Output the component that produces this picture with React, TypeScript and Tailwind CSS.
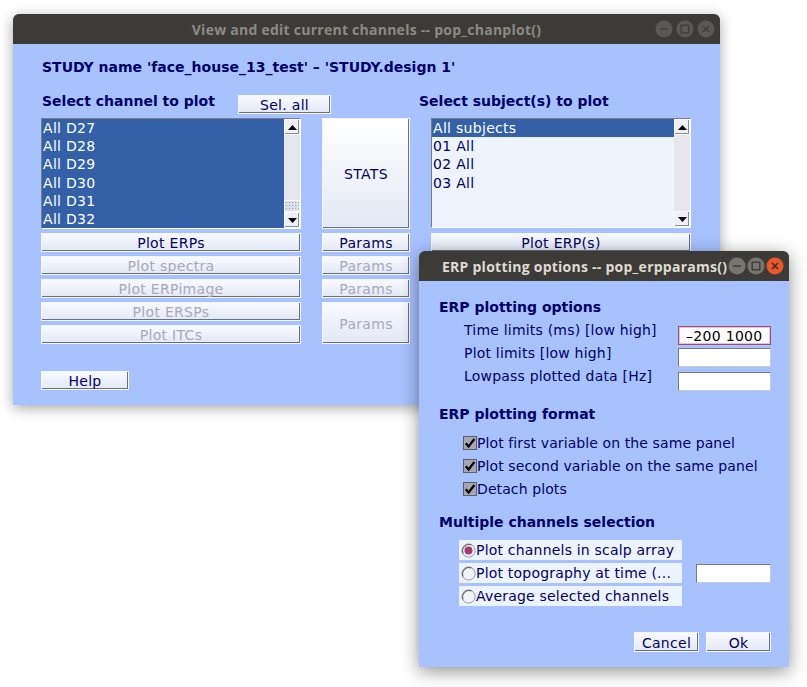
import type { ReactNode } from 'react'
import clsx from 'clsx'

const FONT = "font-['DejaVu_Sans','Liberation_Sans',sans-serif]"

function TitleBar({ title, active }: { title: string; active: boolean }) {
  return (
    <div
      className={clsx(
        'relative flex h-[30px] shrink-0 items-center rounded-t-[6px] bg-[#3c3b37]',
        "font-['Open_Sans','Lato',sans-serif] text-[14px] font-bold tracking-[0.25px]",
        active ? 'justify-start pl-[23px] text-[#dfdbd2]' : 'justify-center text-[#8c8a85]',
      )}
    >
      <span className="whitespace-nowrap">{title}</span>
      <div className={clsx('absolute right-[5px] top-[6px] flex', active ? 'gap-[1px]' : 'gap-[3px]')}>
        <WinButton kind="min" active={active} />
        <WinButton kind="max" active={active} />
        <WinButton kind="close" active={active} />
      </div>
    </div>
  )
}

function WinButton({ kind, active }: { kind: 'min' | 'max' | 'close'; active: boolean }) {
  const isClose = kind === 'close' && active
  const fill = isClose ? '#e9572a' : active ? '#76756f' : '#5a5955'
  const ink = isClose ? '#3c2a20' : active ? '#3c3b37' : '#3f3e3a'
  return (
    <svg width="18" height="18" viewBox="0 0 18 18">
      <circle cx="9" cy="9" r="8.5" fill={fill} />
      {kind === 'min' && <path d="M5 9h8" stroke={ink} strokeWidth="1.4" />}
      {kind === 'max' && <rect x="5.2" y="5.2" width="7.6" height="7.6" fill="none" stroke={ink} strokeWidth="1.3" />}
      {kind === 'close' && <path d="M6 6l6 6M12 6l-6 6" stroke={ink} strokeWidth="1.5" />}
    </svg>
  )
}

function Btn({ children, disabled, className }: { children: ReactNode; disabled?: boolean; className?: string }) {
  return (
    <div
      className={clsx(
        'flex items-center justify-center border border-[#f4f7ff] bg-linear-to-b from-[#f8faff] to-[#e3e8f4]',
        'shadow-[inset_-1px_-1px_0_#6c707c] pt-[1px] text-[14px] leading-none tracking-[0.3px] whitespace-nowrap',
        disabled ? 'text-[#a9a9bc]' : 'text-[#000066]',
        className,
      )}
    >
      {children}
    </div>
  )
}

function Arrow({ up }: { up?: boolean }) {
  return (
    <div className="flex h-[16px] items-center justify-center border border-[#f8f9fc] bg-[#eef0f6] shadow-[inset_-1px_-1px_0_#8a8c94]">
      <svg width="9" height="5" viewBox="0 0 9 5">
        <path d={up ? 'M0 5L4.5 0L9 5Z' : 'M0 0L4.5 5L9 0Z'} fill="#000" />
      </svg>
    </div>
  )
}

function ScrollBar({ thumb }: { thumb?: boolean }) {
  return (
    <div className="flex w-[16px] flex-col bg-[#e6e7ee]">
      <Arrow up />
      <div className="flex flex-1 flex-col justify-end">
        {thumb && (
          <div className="h-[12px] border border-[#f8f9fc] bg-[#d9e0ee] bg-[radial-gradient(#9aa6c0_0.6px,transparent_0.8px)] bg-[length:3px_3px]" />
        )}
      </div>
      <Arrow />
    </div>
  )
}

function ListBox({
  items,
  selected,
  height,
  thumb,
}: {
  items: string[]
  selected: (i: number) => boolean
  height: string
  thumb?: boolean
}) {
  return (
    <div
      className={clsx(
        'flex w-[260px] border border-t-[#7b7b80] border-l-[#7b7b80] border-b-white border-r-white',
        thumb ? 'bg-[#3360a7]' : 'bg-[#eef4ff]',
        height,
      )}
    >
      <div className="flex flex-1 flex-col">
        {items.map((it, i) => (
          <div
            key={it}
            className={clsx(
              'h-[18.2px] pl-[1px] text-[14px] leading-[19px] tracking-[0.3px] whitespace-nowrap',
              selected(i) ? 'bg-[#3360a7] text-white' : 'text-[#000066]',
            )}
          >
            {it}
          </div>
        ))}
      </div>
      <ScrollBar thumb={thumb} />
    </div>
  )
}

function Field({ value, focused, className }: { value?: string; focused?: boolean; className?: string }) {
  return (
    <div
      className={clsx(
        'flex h-[19px] items-center bg-white pl-[7px] text-[14px] leading-none tracking-[0.3px] text-black',
        focused
          ? 'border border-[#a44a76] shadow-[inset_0_0_0_1px_#e8c3d4]'
          : 'border border-t-[#7a7a7a] border-l-[#7a7a7a] border-b-[#c9cbd2] border-r-[#c9cbd2]',
        className,
      )}
    >
      {value}
    </div>
  )
}

function Check({ label }: { label: string }) {
  return (
    <div className="flex h-[18px] items-center">
      <svg width="14" height="14" viewBox="0 0 14 14">
        <rect x="0.5" y="0.5" width="13" height="13" fill="#a7a7b3" stroke="#5e5e66" />
        <path d="M2.8 7.2L5.6 10.4L11.4 3" stroke="#000" strokeWidth="2.3" fill="none" />
      </svg>
      <span className="tracking-[0.1px]">{label}</span>
    </div>
  )
}

function Radio({ label, on }: { label: string; on?: boolean }) {
  return (
    <div className="flex h-[20px] w-[223px] items-center bg-[#eef4ff] pl-[2px]">
      <svg width="15" height="15" viewBox="0 0 15 15">
        <circle cx="7.5" cy="7.5" r="6.6" fill="#f1f4fb" stroke="#9a9aa2" strokeWidth="1" />
        <path d="M2 10.5A6.6 6.6 0 0 1 10.5 1.9" stroke="#55555c" strokeWidth="1" fill="none" />
        {on && <circle cx="7.5" cy="7.5" r="4" fill="#a23b6c" />}
      </svg>
      <span className="whitespace-nowrap tracking-[0.2px]">{label}</span>
    </div>
  )
}

function ChannelWindow() {
  const channels = ['All D27', 'All D28', 'All D29', 'All D30', 'All D31', 'All D32']
  const subjects = ['All subjects', '01 All', '02 All', '03 All']
  return (
    <div className="absolute left-[13px] top-[14px] flex h-[391px] w-[707px] flex-col rounded-t-[6px] bg-[#a8c2ff] shadow-[0_3px_14px_rgba(0,0,0,0.35)]">
      <TitleBar title="View and edit current channels -- pop_chanplot()" active={false} />
      <div className="flex flex-col pl-[28px] pt-[14px] text-[14px] text-[#000066]">
        <div className="h-[18px] pl-[1px] font-bold leading-[18px] whitespace-nowrap">
          STUDY name 'face_house_13_test' – 'STUDY.design 1'
        </div>
        <div className="mt-[16px] flex items-start">
          <span className="h-[18px] w-[197px] pl-[1px] font-bold leading-[18px]">Select channel to plot</span>
          <Btn className="mt-[3px] h-[19px] w-[93px]">Sel. all</Btn>
          <span className="ml-[88px] h-[18px] font-bold leading-[18px]">Select subject(s) to plot</span>
        </div>
        <div className="mt-[4px] flex items-start gap-[21px]">
          <ListBox items={channels} selected={() => true} height="h-[111px]" thumb />
          <Btn className="h-[111px] w-[88px] from-[#ffffff] to-[#d6dbe7]">STATS</Btn>
          <ListBox items={subjects} selected={(i) => i === 0} height="h-[110px]" />
        </div>
        <div className="mt-[4px] grid grid-cols-[260px_88px_260px] auto-rows-[19px] gap-x-[21px] gap-y-[4px]">
          <Btn>Plot ERPs</Btn>
          <Btn>Params</Btn>
          <Btn>Plot ERP(s)</Btn>
          <Btn disabled>Plot spectra</Btn>
          <Btn disabled>Params</Btn>
          <div />
          <Btn disabled>Plot ERPimage</Btn>
          <Btn disabled>Params</Btn>
          <div />
          <Btn disabled>Plot ERSPs</Btn>
          <Btn disabled className="row-span-2">
            Params
          </Btn>
          <div />
          <Btn disabled>Plot ITCs</Btn>
          <div />
        </div>
        <Btn className="mt-[27px] h-[19px] w-[88px]">Help</Btn>
      </div>
    </div>
  )
}

function ErpWindow() {
  return (
    <div className="absolute left-[419px] top-[251px] flex h-[416px] w-[370px] flex-col rounded-t-[6px] bg-[#a8c2ff] shadow-[0_4px_18px_rgba(0,0,0,0.45)]">
      <TitleBar title="ERP plotting options -- pop_erpparams()" active />
      <div className="flex flex-col pl-[20px] pr-[18px] pt-[17px] text-[14px] text-[#000066]">
        <div className="h-[18px] font-bold leading-[18px]">ERP plotting options</div>
        <div className="mt-[5px] grid grid-cols-[214px_93px] auto-rows-[18px] gap-y-[5px] pl-[25px] leading-[18px]">
          <span className="whitespace-nowrap tracking-[0.2px]">Time limits (ms) [low high]</span>
          <Field value="–200 1000" focused className="mt-[5px]" />
          <span className="whitespace-nowrap tracking-[0.2px]">Plot limits [low high]</span>
          <Field className="mt-[4px]" />
          <span className="whitespace-nowrap tracking-[0.2px]">Lowpass plotted data [Hz]</span>
          <Field className="mt-[5px]" />
        </div>
        <div className="mt-[20px] h-[18px] font-bold leading-[18px]">ERP plotting format</div>
        <div className="mt-[11px] flex flex-col gap-[5px] pl-[24px]">
          <Check label="Plot first variable on the same panel" />
          <Check label="Plot second variable on the same panel" />
          <Check label="Detach plots" />
        </div>
        <div className="mt-[15px] h-[18px] font-bold leading-[18px]">Multiple channels selection</div>
        <div className="mt-[9px] flex flex-col gap-[3px] pl-[20px]">
          <Radio label="Plot channels in scalp array" on />
          <div className="flex items-center gap-[14px]">
            <Radio label="Plot topography at time (..." />
            <Field className="h-[19px] w-[75px]" />
          </div>
          <Radio label="Average selected channels" />
        </div>
        <div className="mt-[26px] flex justify-end gap-[7px]">
          <Btn className="h-[20px] w-[65px]">Cancel</Btn>
          <Btn className="h-[20px] w-[65px]">Ok</Btn>
        </div>
      </div>
    </div>
  )
}

export default function App() {
  return (
    <div className={clsx('relative h-[687px] w-[807px] overflow-hidden bg-white', FONT)}>
      <ChannelWindow />
      <ErpWindow />
    </div>
  )
}
